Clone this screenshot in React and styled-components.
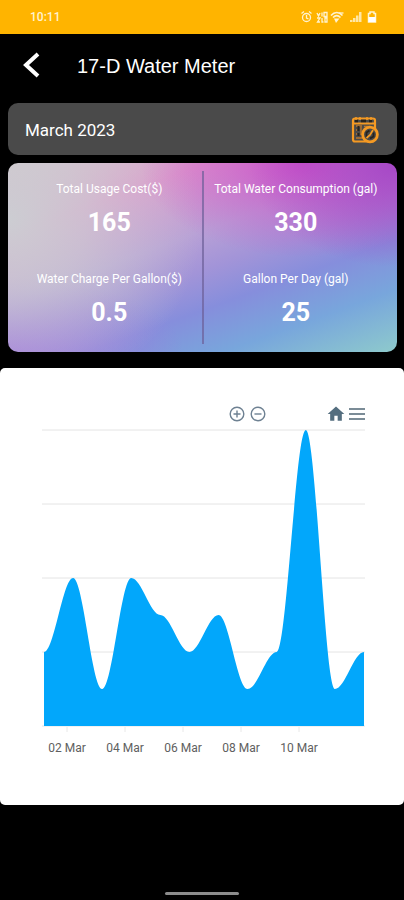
import styled, { createGlobalStyle } from "styled-components";

const readings = [1, 2, 0.5, 2, 1.5, 1, 1.5, 0.5, 1, 4, 0.5, 1];
const ticks = ["02 Mar", "04 Mar", "06 Mar", "08 Mar", "10 Mar"];

const stats = [
	{ label: "Total Usage Cost($)", value: "165" },
	{ label: "Total Water Consumption (gal)", value: "330" },
	{ label: "Water Charge Per Gallon($)", value: "0.5" },
	{ label: "Gallon Per Day (gal)", value: "25" },
];

const plot = { left: 44, right: 364, top: 6, bottom: 302, max: 4 };

const toX = index => plot.left + index * (plot.right - plot.left) / (readings.length - 1);
const toY = value => plot.bottom - value * (plot.bottom - plot.top) / plot.max;

// every segment leaves and enters its points horizontally
const areaPath = values => {
	const ease = (toX(1) - toX(0)) * 0.35;
	const curve = values.slice(1).map((value, i) => (
		`C${toX(i) + ease} ${toY(values[i])} ${toX(i + 1) - ease} ${toY(value)} ${toX(i + 1)} ${toY(value)}`
	)).join(" ");
	return `M${plot.left} ${plot.bottom} V${toY(values[0])} ${curve} V${plot.bottom} Z`;
}

export default function App () {
	return (
		<Screen>
			<GlobalStyle />
			<StatusBar>
				<span>10:11</span>
				<StatusIcons />
			</StatusBar>
			<Header>
				<BackButton type="button" aria-label="Back">
					<svg width="18" height="28" viewBox="0 0 18 28" fill="none" stroke="#fff" strokeWidth="4">
						<path d="M16 2 4 13l12 11" />
					</svg>
				</BackButton>
				<h1>17-D Water Meter</h1>
			</Header>
			<Main>
				<MonthButton type="button">
					March 2023
					<CalendarIcon />
				</MonthButton>
				<Summary>
					{stats.map(stat => (
						<Stat key={stat.label}>
							<dt>{stat.label}</dt>
							<dd>{stat.value}</dd>
						</Stat>
					))}
				</Summary>
			</Main>
			<ChartCard>
				<Toolbar>
					<ToolButton type="button" aria-label="Zoom in"><ZoomIcon plus /></ToolButton>
					<ToolButton type="button" aria-label="Zoom out"><ZoomIcon /></ToolButton>
					<ToolGroup>
						<ToolButton type="button" aria-label="Reset zoom">
							<svg width="20" height="20" viewBox="0 0 24 24" fill="#546e7f">
								<path d="M10 20v-6h4v6h5v-8h3L12 3 2 12h3v8z" />
							</svg>
						</ToolButton>
						<ToolButton type="button" aria-label="Menu">
							<svg width="20" height="20" viewBox="0 0 20 20" stroke="#7b8c97" strokeWidth="2">
								<path d="M2 5h16M2 10h16M2 15h16" />
							</svg>
						</ToolButton>
					</ToolGroup>
				</Toolbar>
				<UsageChart />
			</ChartCard>
			<HomeBar />
		</Screen>
	)
}

function UsageChart () {
	return (
		<Chart viewBox="0 0 404 340" role="img" aria-label="Water usage">
			{[0, 1, 2, 3, 4].map(line => (
				<line key={line} x1="42" x2="365" y1={toY(line)} y2={toY(line)} stroke="#e4e4e4" />
			))}
			<path d={areaPath(readings)} fill="#02a7fb" />
			{ticks.map((tick, i) => (
				<g key={tick}>
					<line x1={67 + i * 58} x2={67 + i * 58} y1="303" y2="308" stroke="#e8e8e8" />
					<text x={67 + i * 58} y="328" textAnchor="middle">{tick}</text>
				</g>
			))}
		</Chart>
	)
}

function ZoomIcon ({ plus }) {
	return (
		<svg width="20" height="20" viewBox="0 0 20 20" fill="none" stroke="#6e8192" strokeWidth="1.4">
			<circle cx="10" cy="10" r="6.8" />
			<path d={plus ? "M6.5 10h7M10 6.5v7" : "M6.5 10h7"} />
		</svg>
	)
}

function StatusIcons () {
	return (
		<svg width="78" height="16" viewBox="0 0 78 16" fill="none" stroke="#fff3d0" strokeWidth="1.3">
			<circle cx="6.5" cy="8.5" r="4" />
			<path d="M1.5 4.5 4 2.5M11.5 4.5 9 2.5M6.5 6v3l2 1" />
			<path d="M17 4l1.5 3L20 4M22 3.5v4M24 3.500h3v4h-3zM17 9h3l-2.5 4H20M22 9v4h1.5M25 9h2v4h-2z" />
			<path d="M31 6.5c3.500-4 8-4 11.500 0M33 8.500c2.500-2.500 5-2.500 7.500 0" strokeWidth="1.6" />
			<path d="M34 9.5h5.500L36 14z" fill="#fff3d0" stroke="none" />
			<path d="M39 4h4.500" />
			<path d="M50 13v-2h2.500v2zM53 13V9h2.500v4zM56 13V6.500h2.500V13zM59 13V3h2.500v10z" fill="#ffe7a6" stroke="none" />
			<path d="M70 3h4v1.500h1.500V13h-7V4.500H70z" strokeWidth="1.5" />
			<path d="M68.500 8h7v5h-7z" fill="#fff" stroke="none" />
		</svg>
	)
}

function CalendarIcon () {
	return (
		<svg width="28" height="28" viewBox="0 0 28 28" fill="none" stroke="#f59a23" strokeWidth="2.2">
			<path d="M15 25.500H4C2.500 25.500 2 24.500 2 23.500V4.500C2 3.500 2.500 2.500 4 2.500h18c1 0 2 1 2 2v8M2 7.500h22" />
			<path d="M4 5h3M10 5h5M18 5h3" stroke="#28231c" strokeWidth="2.4" />
			<path d="M5 1v3M9 1v3M16 1v3M20 1v3" strokeWidth="1.5" />
			<path d="M5 10h6M5 22h6M5 14h1M5 18h1M10 11v8M13 10.500h6" stroke="#b9772e" strokeWidth="1.4" />
			<path d="M7.500 10v5M7.500 17v3" stroke="#28231c" strokeWidth="2" />
			<circle cx="19" cy="18.500" r="7.400" fill="#4b4a49" strokeWidth="2.800" />
			<path d="M15.500 21v-4.500l3-2M22.500 16.500v4l-3.500 2" stroke="#28231c" strokeWidth="1.800" />
			<path d="M22 14l-3 5-3.500 3" strokeWidth="1.700" />
		</svg>
	)
}

const GlobalStyle = createGlobalStyle`
	* {
		box-sizing: border-box;
	}

	body {
		margin: 0;
		background-color: #000;
		font-family: Roboto, "Liberation Sans", sans-serif;
	}

	button {
		border: 0;
		padding: 0;
		background: none;
		font: inherit;
		cursor: pointer;
	}

	svg {
		display: block;
	}
`;

const Screen = styled.div`
	display: flex;
	flex-direction: column;
	min-height: 100vh;
	background-color: #000;
`;

const StatusBar = styled.div`
	display: flex;
	align-items: center;
	justify-content: space-between;
	height: 34px;
	padding: 0 26px 0 30px;
	background-color: #ffb400;
	color: #fff3d0;
	font-size: 12px;
	font-weight: 500;
`;

const Header = styled.header`
	display: flex;
	align-items: center;
	gap: 37px;
	height: 64px;
	padding: 0 22px;

	h1 {
		margin: 0;
		color: #fff;
		font-family: "Liberation Sans", Arial, sans-serif;
		font-size: 20px;
		font-weight: 400;
	}
`;

const BackButton = styled.button`
	flex: none;
`;

const Main = styled.main`
	display: flex;
	flex-direction: column;
	gap: 8px;
	padding: 5px 7px 16px 8px;
`;

const MonthButton = styled.button`
	&& {
		display: flex;
		align-items: center;
		justify-content: space-between;
		height: 52px;
		padding: 1px 18px 0 17px;
		border-radius: 10px;
		background-color: #4a4a4a;
		color: #fff;
		font-size: 17px;
	}
`;

const Summary = styled.dl`
	display: grid;
	grid-template-columns: 1fr 1fr;
	margin: 0;
	padding: 8px;
	border-radius: 10px;
	background:
		linear-gradient(#6c5f98b0, #6c5f98b0) 50% 50% / 2px calc(100% - 16px) no-repeat,
		radial-gradient(ellipse 38% 55% at 100% 0%, #a646c6 0%, #a646c600 100%),
		radial-gradient(ellipse 42% 50% at 76% 0%, #cc50c8 0%, #cc50c880 45%, #cc50c800 100%),
		radial-gradient(ellipse 50% 95% at 0% 30%, #cccdd2 0%, #cccdd2b0 40%, #cccdd200 100%),
		radial-gradient(ellipse 45% 40% at 0% 100%, #a078dc 0%, #a078dc00 100%),
		linear-gradient(160deg, #d6c4ca 0%, #dc98cc 22%, #b8a0d6 42%, #a294d8 54%, #868edc 66%, #78a6dc 81%, #8ecacc 100%);
`;

const Stat = styled.div`
	display: flex;
	flex-direction: column;
	align-items: center;
	gap: 8px;
	padding: 10px 0;
	color: #fff;
	white-space: nowrap;

	dt {
		font-size: 12px;
		line-height: 16px;
	}

	dd {
		margin: 0;
		font-size: 25px;
		font-weight: 700;
		line-height: 36px;
	}

	&:nth-child(n + 3) {
		padding: 20px 0 13px;
	}
`;

const ChartCard = styled.section`
	padding: 36px 0 41px;
	border-radius: 5px;
	background-color: #fff;
`;

const Toolbar = styled.div`
	display: flex;
	align-items: center;
	justify-content: flex-end;
	gap: 1px;
	padding-right: 37px;
`;

const ToolGroup = styled.div`
	display: flex;
	gap: 1px;
	margin-left: 57px;
`;

const ToolButton = styled.button`
	flex: none;
`;

const Chart = styled.svg`
	width: 100%;

	text {
		fill: #606060;
		font-size: 12px;
	}
`;

const HomeBar = styled.div`
	width: 74px;
	height: 3px;
	margin: auto auto 5px;
	border-radius: 2px;
	background-color: #8c8c8c;
`;
